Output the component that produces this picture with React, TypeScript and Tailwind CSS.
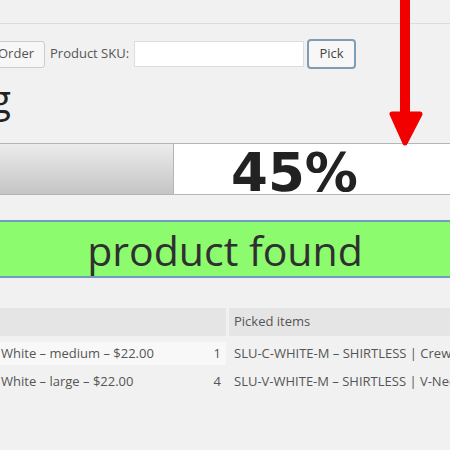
import React from 'react';

const rows = [
  { name: 'White – medium – $22.00', qty: 1, picked: 'SLU-C-WHITE-M – SHIRTLESS | Crew Neck – White – medium', light: true },
  { name: 'White – large – $22.00', qty: 4, picked: 'SLU-V-WHITE-M – SHIRTLESS | V-Neck – White – medium', light: false },
];

const App: React.FC = () => {
  return (
    <div className="relative w-[450px] h-[450px] overflow-hidden bg-[#f1f1f1] text-[#555] font-['Open_Sans',sans-serif]">
      {/* top admin bar edge */}
      <div className="h-[24px] border-b border-[#dcdcdc]"></div>

      {/* scan row */}
      <div className="mt-[15px] flex items-center h-[30px] whitespace-nowrap text-[13px]">
        <button className="ml-[-20px] w-[65px] h-[27px] pr-[10px] text-right bg-[#f7f7f7] border border-[#cccccc] rounded-[3px] text-[#555]">
          Order
        </button>
        <span className="ml-[5px] text-[#555]">Product SKU:</span>
        <input className="ml-[5px] w-[170px] h-[26px] bg-white border border-[#dddddd] outline-none" />
        <button className="ml-[3px] w-[49px] h-[30px] bg-[#f7f7f7] border-2 border-[#7f9db5] rounded-[4px] text-[#444]">
          Pick
        </button>
      </div>

      {/* heading, cut off at left */}
      <div className="mt-[8px] w-[11px] h-[42px] flex justify-end whitespace-nowrap">
        <h1 className="text-[38px] leading-[42px] text-[#222] font-['Open_Sans',sans-serif]">Picking</h1>
      </div>

      {/* progress */}
      <div className="mt-[24px] flex h-[52px] border-y border-[#b5b5b5] bg-white">
        <div className="w-[174px] border-r border-[#b5b5b5] bg-gradient-to-b from-[#ececec] to-[#c5c5c5]"></div>
        <div className="flex-1 flex items-center pl-[57px] pt-[7px]">
          <span className="text-[53px] leading-none font-bold text-[#222] font-['DejaVu_Sans',sans-serif]">45%</span>
        </div>
      </div>

      {/* status */}
      <div className="mt-[25px] h-[58px] flex items-center justify-center bg-[#8dfb6e] border-y-2 border-[#6f9dbe]">
        <span className="text-[41px] leading-none text-[#303030] pt-[2px]">product found</span>
      </div>

      {/* table */}
      <div className="mt-[30px] text-[13px] whitespace-nowrap">
        <div className="flex gap-[3px] h-[28px]">
          <div className="w-[226px] bg-[#e5e5e5]"></div>
          <div className="flex-1 bg-[#e5e5e5] flex items-center pl-[5px] text-[#555]">Picked items</div>
        </div>
        <div className="mt-[6px] flex flex-col gap-[5px]">
          {rows.map((r, i) => (
            <div key={i} className="flex gap-[3px] h-[23px]">
              <div className={`w-[226px] flex items-center justify-between pl-[1px] pr-[5px] ${r.light ? 'bg-[#f8f8f8]' : ''}`}>
                <span>{r.name}</span>
                <span>{r.qty}</span>
              </div>
              <div className="flex-1 flex items-center pl-[5px] overflow-hidden">{r.picked}</div>
            </div>
          ))}
        </div>
      </div>

      {/* red arrow overlay */}
      <svg className="absolute left-[388px] top-0" width="36" height="148" viewBox="0 0 36 148">
        <rect x="12" y="0" width="10" height="118" fill="#f20000" />
        <polygon points="4,114 32,114 17,143" fill="#f20000" stroke="#f20000" strokeWidth="5" strokeLinejoin="round" />
      </svg>
    </div>
  );
};

export default App;
